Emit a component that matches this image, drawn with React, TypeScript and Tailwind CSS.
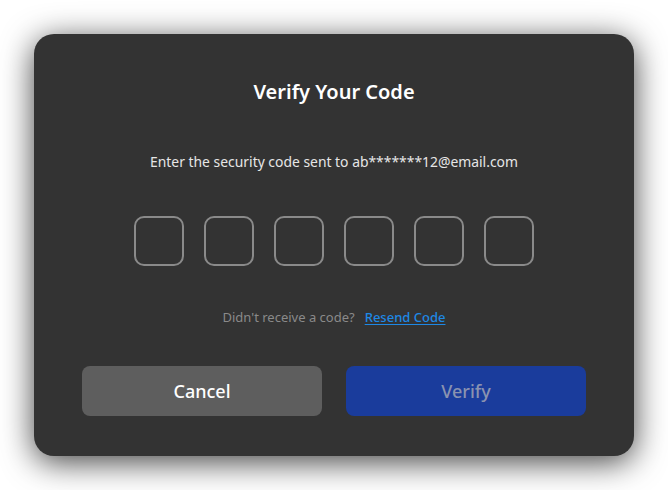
export default function App() {
  const boxes = [0, 1, 2, 3, 4, 5];
  return (
    <div className="w-[668px] h-[490px] bg-white flex items-start justify-center pt-[34px]" style={{ fontFamily: '"Noto Sans", "Noto Sans CJK KR", sans-serif' }}>
      <div className="w-[600px] h-[422px] bg-[#333333] rounded-[20px] shadow-[0_6px_32px_rgba(0,0,0,0.75)] flex flex-col items-center px-[48px] pt-[44px]">
        <h1 className="text-[20px] leading-[28px] font-semibold text-white">Verify Your Code</h1>
        <p className="mt-[46px] text-[13.9px] leading-[20px] text-[#e6e6e6]">Enter the security code sent to ab*******12@email.com</p>
        <div className="mt-[44px] flex gap-[20px]">
          {boxes.map((b) => (
            <div key={b} className="w-[50px] h-[50px] rounded-[10px] border-2 border-[#8a8a8a]" />
          ))}
        </div>
        <div className="mt-[41px] flex items-center gap-[10px] text-[13px] leading-[20px]">
          <span className="text-[#8a8a8a]">Didn't receive a code?</span>
          <span className="text-[#1e88e5] font-medium underline underline-offset-2">Resend Code</span>
        </div>
        <div className="mt-[39px] flex gap-[24px] w-full">
          <button className="flex-1 h-[50px] rounded-[8px] bg-[#5e5e5e] text-white text-[18px] font-medium">Cancel</button>
          <button className="flex-1 h-[50px] rounded-[8px] bg-[#1a3c9c] text-[#8a93b0] text-[18px] font-medium">Verify</button>
        </div>
      </div>
    </div>
  );
}
